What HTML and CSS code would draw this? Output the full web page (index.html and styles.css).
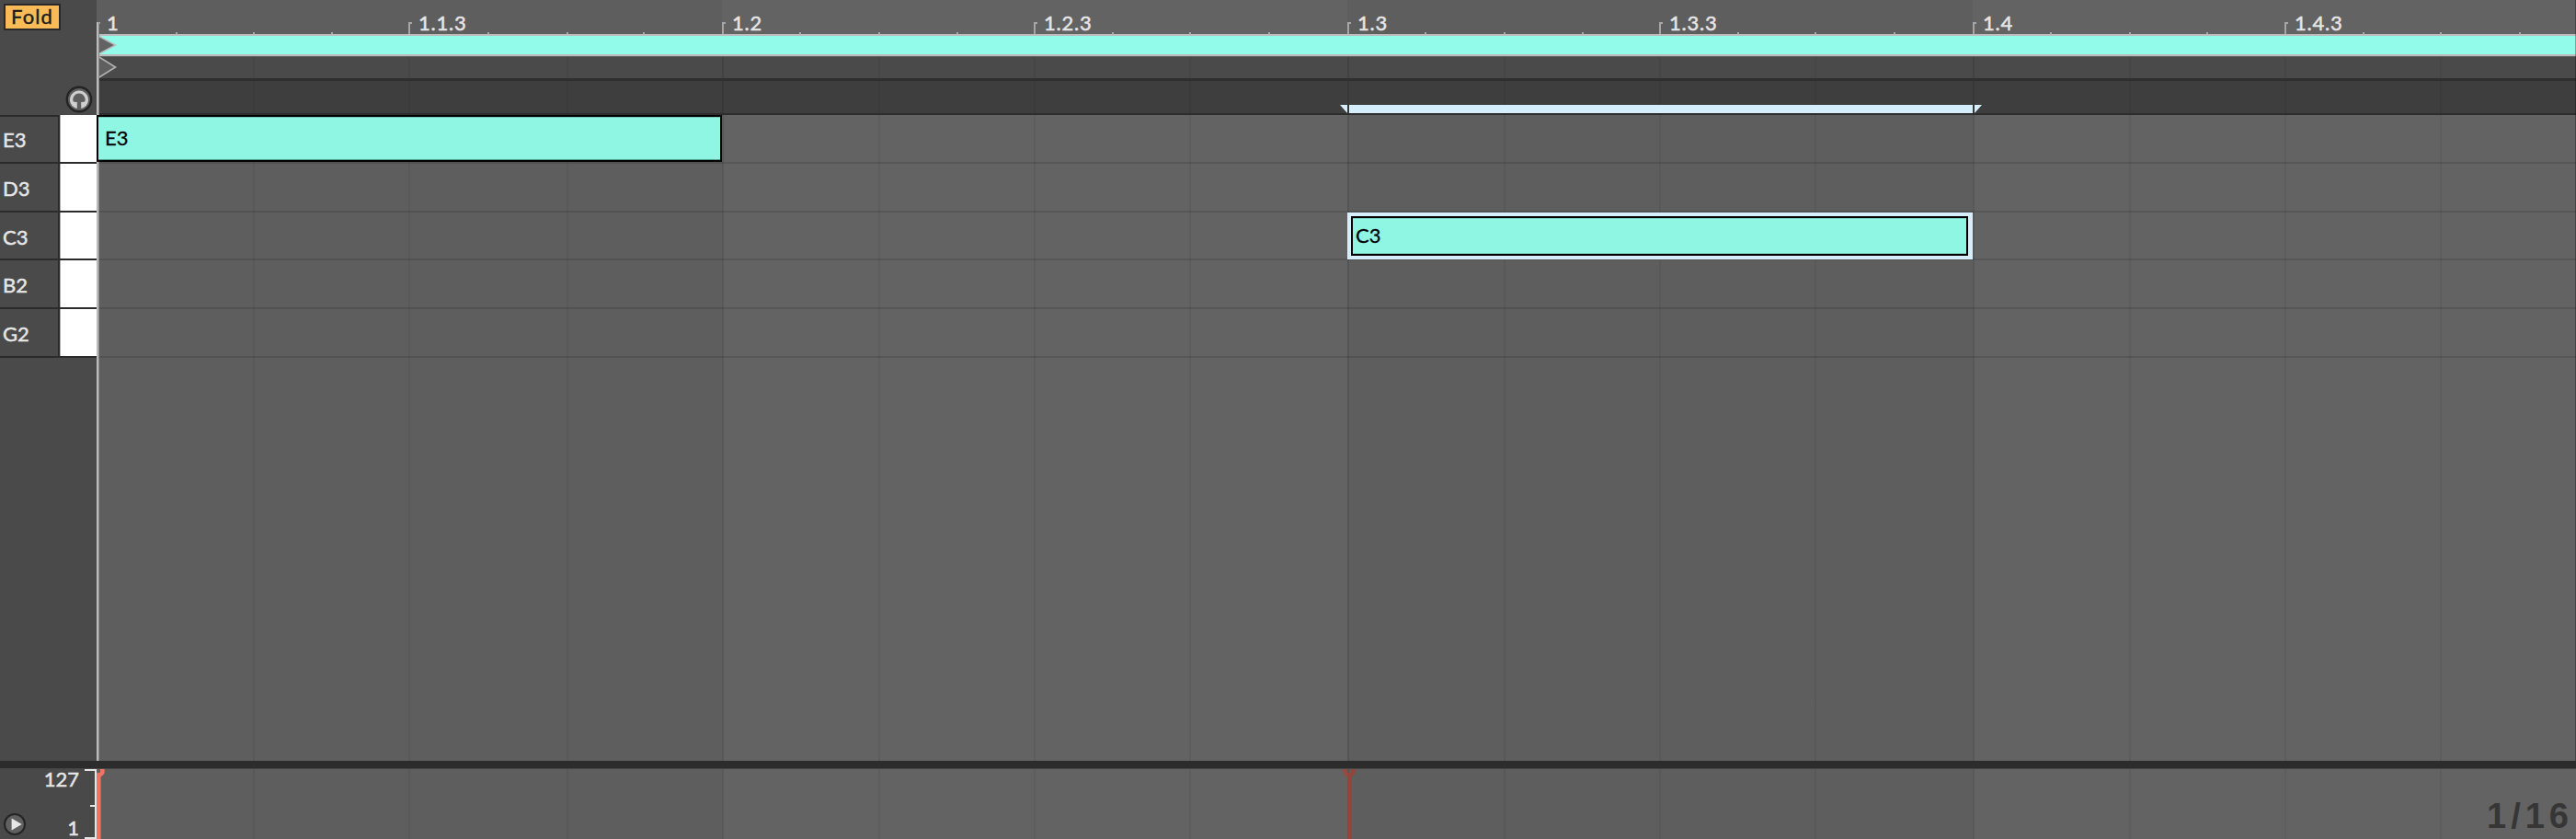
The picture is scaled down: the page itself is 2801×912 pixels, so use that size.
FILE: index.html
```
<!DOCTYPE html>
<html lang="en">
<head>
<meta charset="utf-8">
<title>MIDI Note Editor</title>
<link rel="stylesheet" href="styles.css">
</head>
<body>
<div class="editor">
  <section class="roll">
    <aside class="sidebar">
      <div class="tools">
        <button class="fold">Fold</button>
        <svg class="preview" width="30" height="30" viewBox="0 0 30 30">
          <circle cx="15" cy="15" r="13.2" fill="#5f5f5f" stroke="#242424" stroke-width="2.4"/>
          <path d="M15 5.600A9.700 9.700 0 0 0 9.500 23.500Q11 24.800 12.800 24.800H17.200Q19 24.800 20.500 23.500A9.700 9.700 0 0 0 15 5.600Z" fill="#d0d0d0"/>
          <path d="M15 8.400C11 8.400 8.300 12 8.300 15.500C8.300 17.600 9.500 18.200 12.800 17.900V25.500H17.200V17.900C20.500 18.200 21.700 17.600 21.700 15.500C21.700 12 19 8.400 15 8.400Z" fill="#5f5f5f"/>
        </svg>
      </div>
      <ul class="keys">
        <li class="key first"><span class="name">E3</span><span class="white"></span></li>
        <li class="key"><span class="name">D3</span><span class="white"></span></li>
        <li class="key short"><span class="name">C3</span><span class="white"></span></li>
        <li class="key"><span class="name">B2</span><span class="white"></span></li>
        <li class="key"><span class="name">G2</span><span class="white"></span></li>
      </ul>
    </aside>
    <main class="timeline">
      <div class="ruler">
        <span class="mark odd">1</span><span class="mark even">1.1.3</span>
        <span class="mark odd">1.2</span><span class="mark even">1.2.3</span>
        <span class="mark odd">1.3</span><span class="mark even">1.3.3</span>
        <span class="mark odd">1.4</span><span class="mark even">1.4.3</span>
      </div>
      <div class="loop">
        <svg class="flag" width="22" height="20" viewBox="0 0 22 20"><path d="M0 .2L18.500 10L0 19.800Z" fill="#636363" stroke="#b9b9b9" stroke-width="1.5"/></svg>
      </div>
      <div class="start grid">
        <svg class="flag" width="22" height="24" viewBox="0 0 22 24"><path d="M0 .5L18.500 12L0 23.500Z" fill="#5f5f5f" stroke="#b0b0b0" stroke-width="1.700"/></svg>
      </div>
      <div class="scrub grid">
        <svg class="range" width="698" height="9" viewBox="0 0 698 9"><path d="M0 0H8V9ZM10 0H688V9H10ZM690 0H698L690 9Z" fill="#d6eefc"/></svg>
      </div>
      <div class="rows grid">
        <div class="row"><div class="note">E3</div></div>
        <div class="row"></div>
        <div class="row short"><div class="note selected"><span class="body">C3</span></div></div>
        <div class="row"></div>
        <div class="row"></div>
      </div>
    </main>
  </section>
  <div class="divider"></div>
  <section class="velocity">
    <aside class="scale">
      <svg class="play" width="26" height="26" viewBox="0 0 26 26"><circle cx="13" cy="13" r="11" fill="#606060" stroke="#242424" stroke-width="2"/><path d="M9.600 6.500V19.600L20.700 13Z" fill="#e6e6e6"/></svg>
      <div class="limits"><span>127</span><span>1</span></div>
      <svg class="bracket" width="13" height="76" viewBox="0 0 13 76"><path d="M0 0H13V76H0V74H11V41H6V39H11V2H0Z" fill="#e6e6e6"/></svg>
    </aside>
    <div class="lane grid">
      <svg class="stem first-stem" width="14" height="76" viewBox="0 0 14 76"><circle cx="7" cy="2" r="4.500"/><path d="M7.300 6V76"/></svg>
      <svg class="stem dim" width="14" height="76" viewBox="0 0 14 76"><circle cx="7" cy="2" r="4.500"/><path d="M7.200 6V76"/></svg>
      <span class="resolution">1/16</span>
    </div>
  </section>
</div>
</body>
</html>
```

FILE: styles.css
```
* { box-sizing: border-box; }

body {
  margin: 0;
  font-family: Lato, "Noto Sans", sans-serif;
  font-size: 22px;
  line-height: 26px;
  color: #e6e6e6;
}

svg { display: block; }

.editor {
  --beat: rgba(0, 0, 0, .11);
  --sub: rgba(0, 0, 0, .06);
  --tick: #a6a6a6;
  width: 2801px;
  height: 912px;
  display: flex;
  flex-direction: column;
  overflow: hidden;
  background: #494949;
}

.roll { display: flex; height: 827px; }
.sidebar { width: 105px; flex: none; background: #4a4a4a; }

.tools {
  height: 125px;
  display: flex;
  flex-direction: column;
  justify-content: space-between;
  align-items: flex-start;
  padding: 4px 4px 2px;
}

.fold {
  width: 62px;
  height: 29px;
  padding: 0 0 1px;
  border: 2px solid #292929;
  background: #f8bb57;
  color: #1c1c1c;
  font: 22px/24px Lato, sans-serif;
  letter-spacing: 1.1px;
  -webkit-text-stroke: .4px;
}

.preview { align-self: flex-end; }

.keys { list-style: none; margin: 0; padding: 0; }
.key { display: flex; height: 53px; border-bottom: 2px solid #2b2b2b; }
.key.short, .row.short { height: 52px; }

.name {
  width: 65px;
  padding: 14px 0 0 3px;
  border-right: 2px solid #2b2b2b;
  -webkit-text-stroke: .5px;
}

.first .name { border-top: 2px solid #2b2b2b; padding-top: 12px; }
.white { flex: 1; background: #fff; border-left: 1px solid #aaa; }

.timeline {
  position: relative;
  width: 2696px;
  display: flex;
  flex-direction: column;
  background: linear-gradient(90deg, #5e5e5e 680px, #636363 680px 1360px, #5e5e5e 1360px 2040px, #636363 2040px);
}

/* playback line */
.timeline::before {
  content: "";
  position: absolute;
  left: 0;
  top: 24px;
  bottom: 0;
  width: 3px;
  background: linear-gradient(90deg, #bbb 2px, #8a8a8a 2px);
}

/* right window edge */
.timeline::after {
  content: "";
  position: absolute;
  right: 0;
  top: 0;
  bottom: 0;
  width: 1px;
  background: rgba(0, 0, 0, .3);
}

.ruler {
  height: 37px;
  display: flex;
  background:
    linear-gradient(var(--tick), var(--tick)) 86px 100% / 2px 2px,
    linear-gradient(var(--tick), var(--tick)) 170px 100% / 2px 2px,
    linear-gradient(var(--tick), var(--tick)) 255px 100% / 2px 2px,
    linear-gradient(var(--tick), var(--tick)) 425px 100% / 2px 2px,
    linear-gradient(var(--tick), var(--tick)) 511px 100% / 2px 2px,
    linear-gradient(var(--tick), var(--tick)) 594px 100% / 2px 2px,
    linear-gradient(var(--tick), var(--tick)) 764px 100% / 2px 2px,
    linear-gradient(var(--tick), var(--tick)) 850px 100% / 2px 2px,
    linear-gradient(var(--tick), var(--tick)) 935px 100% / 2px 2px,
    linear-gradient(var(--tick), var(--tick)) 1104px 100% / 2px 2px,
    linear-gradient(var(--tick), var(--tick)) 1188px 100% / 2px 2px,
    linear-gradient(var(--tick), var(--tick)) 1274px 100% / 2px 2px,
    linear-gradient(var(--tick), var(--tick)) 1444px 100% / 2px 2px,
    linear-gradient(var(--tick), var(--tick)) 1530px 100% / 2px 2px,
    linear-gradient(var(--tick), var(--tick)) 1615px 100% / 2px 2px,
    linear-gradient(var(--tick), var(--tick)) 1784px 100% / 2px 2px,
    linear-gradient(var(--tick), var(--tick)) 1868px 100% / 2px 2px,
    linear-gradient(var(--tick), var(--tick)) 1954px 100% / 2px 2px,
    linear-gradient(var(--tick), var(--tick)) 2124px 100% / 2px 2px,
    linear-gradient(var(--tick), var(--tick)) 2210px 100% / 2px 2px,
    linear-gradient(var(--tick), var(--tick)) 2294px 100% / 2px 2px,
    linear-gradient(var(--tick), var(--tick)) 2464px 100% / 2px 2px,
    linear-gradient(var(--tick), var(--tick)) 2548px 100% / 2px 2px,
    linear-gradient(var(--tick), var(--tick)) 2634px 100% / 2px 2px;
  background-repeat: no-repeat;
}

.mark {
  flex: none;
  padding: 12px 0 0 11px;
  letter-spacing: .75px;
  -webkit-text-stroke: .5px;
  background:
    linear-gradient(var(--tick), var(--tick)) 0 24px / 2px 13px no-repeat,
    linear-gradient(var(--tick), var(--tick)) 0 24px / 4px 2px no-repeat;
}

.odd { width: 339px; }
.even { width: 341px; }

.loop {
  height: 24px;
  border-top: 2px solid #bbb;
  border-bottom: 2px solid #bbb;
  background: #92fbe9;
}

.flag { margin-left: 2px; }

/* beat and subdivision lines */
.grid {
  background-image:
    linear-gradient(var(--beat), var(--beat)), linear-gradient(var(--beat), var(--beat)),
    linear-gradient(var(--beat), var(--beat)),
    linear-gradient(var(--sub), var(--sub)), linear-gradient(var(--sub), var(--sub)),
    linear-gradient(var(--sub), var(--sub)), linear-gradient(var(--sub), var(--sub)),
    linear-gradient(var(--sub), var(--sub)), linear-gradient(var(--sub), var(--sub)),
    linear-gradient(var(--sub), var(--sub)), linear-gradient(var(--sub), var(--sub)),
    linear-gradient(var(--sub), var(--sub)), linear-gradient(var(--sub), var(--sub)),
    linear-gradient(var(--sub), var(--sub)), linear-gradient(var(--sub), var(--sub));
  background-position:
    680px 0, 1360px 0, 2040px 0,
    339px 0, 1019px 0, 1699px 0, 2379px 0,
    170px 0, 511px 0, 850px 0, 1188px 0,
    1530px 0, 1868px 0, 2210px 0, 2548px 0;
  background-size: 2px 100%;
  background-repeat: no-repeat;
}

.start { height: 27px; border-top: 1px solid #606060; border-bottom: 3px solid #2f2f2f; background-color: #4a4a4a; }
.start .flag { margin-top: -1px; }

.scrub {
  height: 37px;
  display: flex;
  align-items: flex-end;
  padding-left: 1352px;
  border-bottom: 2px solid #2d2d2d;
  background-color: #3e3e3e;
}

.rows { flex: 1; }
.row { display: flex; height: 53px; border-bottom: 2px solid rgba(0, 0, 0, .12); }

.note {
  position: relative;
  width: 680px;
  height: 51px;
  padding: 10px 0 0 7px;
  border: 2px solid #000;
  background: #90f6e4;
  box-shadow: inset 0 1px #77c9bb, inset 0 -1px #55a092;
  color: #000;
  -webkit-text-stroke: .3px;
}

.note.selected {
  margin-left: 1360px;
  display: flex;
  padding: 0;
  border: solid #d6eefc;
  border-width: 4px 5px 4px 4px;
  box-shadow: none;
}

.body {
  flex: 1;
  padding: 6px 0 0 3px;
  border: 2px solid #000;
  box-shadow: inset 0 1px #77c9bb, inset 0 -1px #77c9bb;
}

.divider { height: 9px; flex: none; background: #2c2c2c; border-bottom: 1px solid #454545; }

.velocity { display: flex; height: 76px; }

.scale {
  width: 105px;
  flex: none;
  display: flex;
  justify-content: space-between;
  padding-left: 3px;
  background: #494949;
}

.play { margin-top: 47px; }

.limits {
  flex: 1;
  display: flex;
  flex-direction: column;
  justify-content: space-between;
  margin: -2px 0 -1px;
  padding: 0 6px 0 0;
  text-align: right;
  -webkit-text-stroke: .5px;
}

.lane {
  position: relative;
  width: 2696px;
  overflow: hidden;
  display: flex;
  background-color: #5e5e5e;
}

.lane::before,
.lane::after {
  content: "";
  position: absolute;
  top: 0;
  bottom: 0;
  width: 680px;
  left: 680px;
  background: rgba(255, 255, 255, .03);
}

.lane::after { left: 2040px; width: 656px; border-right: 1px solid #454545; }

.stem { flex: none; fill: none; stroke: #f47163; stroke-width: 4.6; }
.first-stem { margin-left: -5px; }
.dim { margin-left: 1346px; stroke: #93453c; }

.resolution {
  margin: 29px 3px 0 auto;
  font: bold 38px/44px "Liberation Sans", sans-serif;
  letter-spacing: 5px;
  color: #303030;
}
```
